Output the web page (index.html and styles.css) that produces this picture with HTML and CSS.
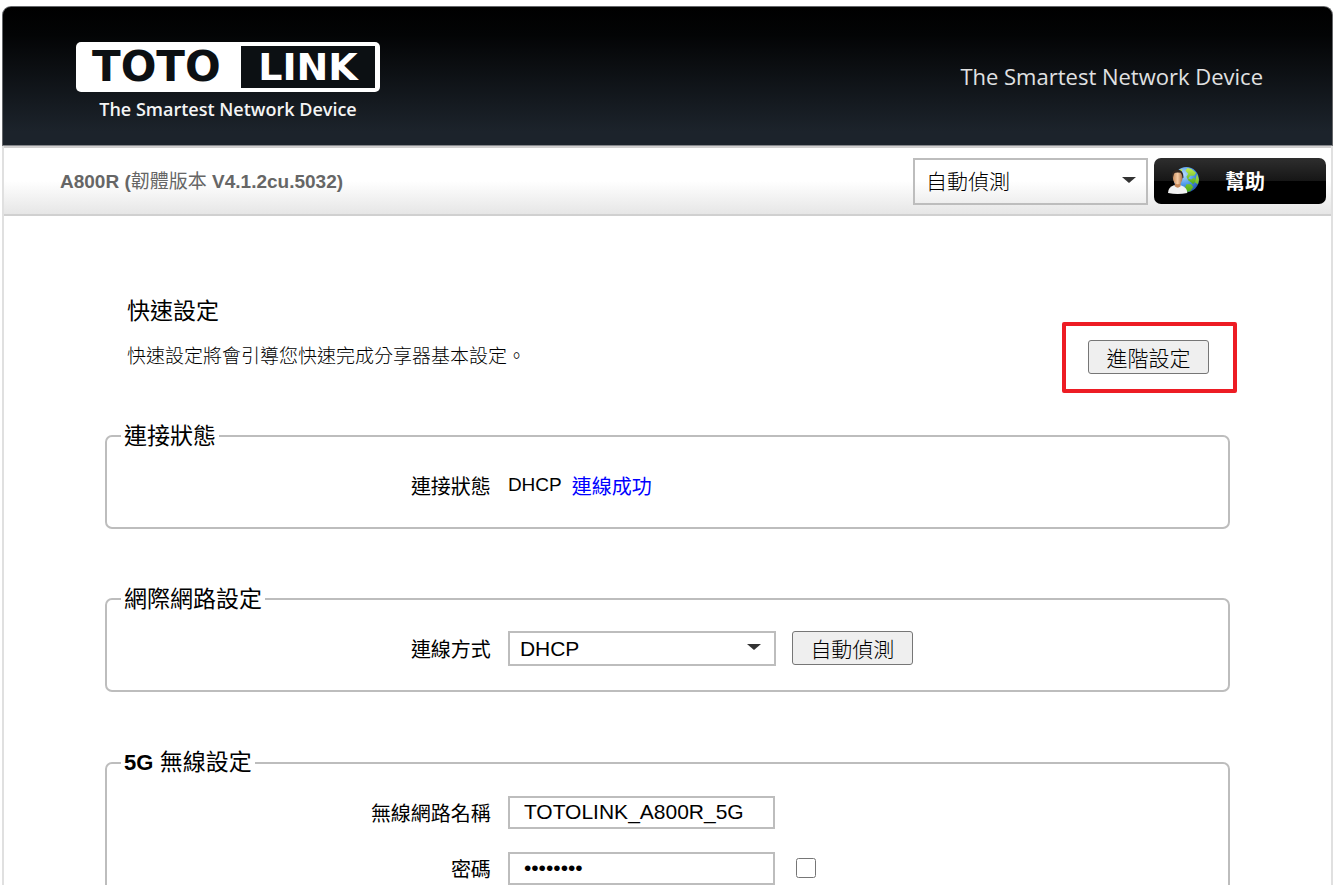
FILE: index.html
```html
<!DOCTYPE html>
<html lang="zh-Hant">
<head>
<meta charset="utf-8">
<title>TOTOLINK A800R</title>
<link rel="stylesheet" href="styles.css">
</head>
<body>
<div class="page">
  <header class="banner">
    <div class="brand">
      <div class="logo"><span class="logo-toto">TOTO</span><span class="logo-link">LINK</span></div>
      <div class="brand-slogan">The Smartest Network Device</div>
    </div>
    <div class="slogan">The Smartest Network Device</div>
  </header>
  <div class="panel">
    <div class="toolbar">
      <div class="model">A800R (<span class="thin">韌體版本</span> V4.1.2cu.5032)</div>
      <div class="tools">
        <span class="dropdown dropdown-lang">
          <select aria-label="語言"><option>自動偵測</option></select>
        </span>
        <button type="button" class="help">
          <svg class="help-icon" viewBox="0 0 32 30" aria-hidden="true">
            <defs>
              <radialGradient id="sea" cx="0.4" cy="0.3" r="0.8"><stop offset="0" stop-color="#b5dcff"/><stop offset="0.5" stop-color="#4d98e8"/><stop offset="1" stop-color="#1a439c"/></radialGradient>
              <linearGradient id="land" x1="0" y1="0" x2="0" y2="1"><stop offset="0" stop-color="#c5ee52"/><stop offset="1" stop-color="#4caa16"/></linearGradient>
              <linearGradient id="face" x1="0" y1="0" x2="1" y2="0"><stop offset="0" stop-color="#c98d5e"/><stop offset="0.5" stop-color="#f6cba3"/><stop offset="1" stop-color="#a86d42"/></linearGradient>
            </defs>
            <circle cx="19" cy="14" r="13" fill="url(#sea)"/>
            <path d="M20 2 L24 3 L29 7 L27 10 L23 10 L21 13 L24 14 L27 12 L29 15 L26 19 L24 17 L21 15 L19 11 L21 8 L18 5 Z" fill="url(#land)"/>
            <path d="M30 8 L32 14 L31 19 L28 17 L29 12 Z M19 19 L24 19 L26 22 L23 26 L19 27 L17 24 Z M12 4 L15 3 L14 6 L10 9 Z" fill="url(#land)"/>
            <path d="M0 28 Q0 22 6 20 H13 Q20 22 20 28 Q10 30 0 28Z" fill="#f2f2f2"/>
            <path d="M7 17 H13 V21 Q10 24 7 21Z" fill="#c78858"/>
            <ellipse cx="10" cy="12" rx="5" ry="7" fill="url(#face)"/>
            <path d="M4 12 Q3 4 10 4 Q16 4 16 12 L15 13 Q15 9 13 7 Q8 6 6 8 L5 13Z" fill="#30251f"/>
          </svg>
          <span>幫助</span>
        </button>
      </div>
    </div>
    <main class="content">
      <section class="intro">
        <h1>快速設定</h1>
        <div class="intro-row">
          <p>快速設定將會引導您快速完成分享器基本設定。</p>
          <span class="marked"><button type="button" class="btn">進階設定</button></span>
        </div>
      </section>
      <form>
        <fieldset>
          <legend>連接狀態</legend>
          <div class="row">
            <span class="label">連接狀態</span>
            <div class="field status"><span>DHCP</span><span class="ok">連線成功</span></div>
          </div>
        </fieldset>
        <fieldset>
          <legend>網際網路設定</legend>
          <div class="row">
            <label class="label" for="mode">連線方式</label>
            <div class="field">
              <span class="dropdown"><select id="mode"><option>DHCP</option></select></span>
              <button type="button" class="btn">自動偵測</button>
            </div>
          </div>
        </fieldset>
        <fieldset>
          <legend><b>5G</b> 無線設定</legend>
          <div class="row">
            <label class="label" for="ssid">無線網路名稱</label>
            <div class="field"><input class="text" id="ssid" type="text" value="TOTOLINK_A800R_5G"></div>
          </div>
          <div class="row">
            <label class="label" for="pass">密碼</label>
            <div class="field">
              <input class="text" id="pass" type="password" value="password">
              <input class="check" type="checkbox" aria-label="顯示密碼">
            </div>
          </div>
        </fieldset>
      </form>
    </main>
  </div>
</div>
</body>
</html>
```
FILE: styles.css
```css
* { box-sizing: border-box; }

body {
  margin: 0;
  background: #fff;
  color: #000;
  font: 20px "Liberation Sans", "Noto Sans CJK TC", sans-serif;
}

select, input, button { margin: 0; font-family: inherit; color: #000; }

.page { padding: 6px 8px 0 2px; }

.banner {
  display: flex;
  justify-content: space-between;
  height: 140px;
  padding: 35px 69px 0 73px;
  border: 1px solid #65676a;
  border-bottom: 1px solid #85878b;
  border-radius: 9px 9px 0 0;
  background: linear-gradient(#000 0%, #030405 20%, #1c232b 90%);
  color: #f4f4f4;
}

.brand { width: 304px; }

.logo {
  display: flex;
  justify-content: space-between;
  height: 50px;
  padding: 4px 5px 4px 16px;
  border-radius: 5px;
  background: #fff;
  font: bold 38px/42px "DejaVu Sans", sans-serif;
}

.logo-toto { color: #0c1013; font-size: 42px; }
.logo-link { width: 134px; background: #0c1013; color: #fff; text-align: center; }

.brand-slogan {
  text-align: center;
  font: 600 18px/34px "Open Sans", sans-serif;
}

.slogan {
  padding-top: 18px;
  font: 22px/32px "Open Sans", sans-serif;
  color: #e0e1e2;
}

.panel { border: solid #e0e0e0; border-width: 0 2px; }

.toolbar {
  display: flex;
  align-items: center;
  justify-content: space-between;
  height: 70px;
  padding: 0 5px 0 56px;
  border-top: 2px solid #d0cfcf;
  border-bottom: 2px solid #d0d0d0;
  background: linear-gradient(#fff 50%, #e6e6e6);
}

.model { padding-bottom: 4px; font-size: 19px; font-weight: bold; color: #666; }
.thin { font-weight: 400; }
.tools { display: flex; gap: 6px; }

.dropdown { position: relative; display: flex; width: 268px; height: 35px; }
.dropdown-lang { width: 235px; height: 47px; }

.dropdown select {
  width: 100%;
  padding: 0 10px;
  border: 2px solid #bdbdbd;
  border-radius: 0;
  background: transparent;
  appearance: none;
  font-size: 21px;
  font-weight: 300;
}

.dropdown-lang select { padding: 0 11px; }

.dropdown::after {
  content: "";
  position: absolute;
  top: 50%;
  right: 15px;
  margin-top: -4px;
  border: solid transparent;
  border-width: 6px 7px 0;
  border-top-color: #333;
  pointer-events: none;
}

.dropdown-lang::after { right: 12px; }

.help {
  display: flex;
  align-items: center;
  gap: 26px;
  width: 172px;
  height: 46px;
  padding: 0 14px;
  border: 0;
  border-radius: 7px;
  background: linear-gradient(#2e2e2e, #161616 50%, #000 50%);
  color: #fff;
  font-size: 20px;
  font-weight: bold;
}

.help-icon { width: 31px; height: 29px; }

.content { padding: 79px 101px 0; }
.intro { padding: 0 21px 0 22px; margin-bottom: 46px; }
.intro h1 { margin: 0 0 13px; font-size: 23px; font-weight: 400; line-height: 32px; }

.intro-row { display: flex; align-items: center; justify-content: space-between; }
.intro p { margin: 0; font-size: 19px; font-weight: 300; line-height: 28px; }

.marked { position: relative; display: flex; }
.marked::after {
  content: "";
  position: absolute;
  inset: -18px -28px -19px -26px;
  border: 4px solid #ed1c24;
  border-radius: 2px;
  pointer-events: none;
}

.btn {
  width: 121px;
  height: 34px;
  padding: 0;
  border: 1px solid #767676;
  border-radius: 3px;
  background: #efefef;
  font-size: 21px;
  font-weight: 300;
}

fieldset {
  min-width: 0;
  margin: 0 0 54px;
  padding: 5px 14px 14px;
  border: 2px solid #bdbdbd;
  border-radius: 7px;
}

legend { padding: 0 3px; font-size: 23px; line-height: 32px; }
legend b { font-size: 22px; }

.row {
  display: grid;
  grid-template-columns: 11fr 21fr;
  column-gap: 17px;
  align-items: center;
  height: 56px;
}

.label { text-align: right; }
.field { display: flex; align-items: center; gap: 16px; }
.status { gap: 10px; font-size: 19px; }
.ok { color: #00f; font-size: 20px; }

.text {
  width: 267px;
  height: 33px;
  padding: 0 14px;
  border: 2px solid #bdbdbd;
  border-radius: 0;
  font-size: 21px;
}

.check { width: 20px; height: 20px; margin-left: 5px; }
```
